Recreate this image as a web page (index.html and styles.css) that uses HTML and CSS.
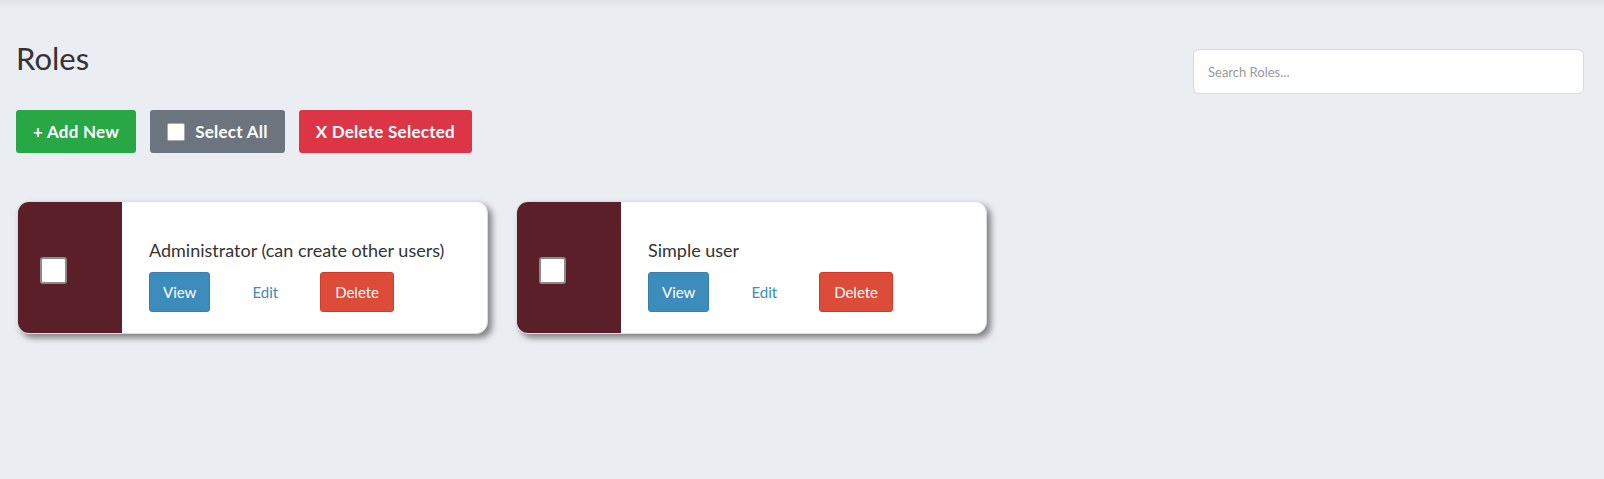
FILE: index.html
```html
<!DOCTYPE html>
<html lang="en">
<head>
<meta charset="utf-8">
<title>Roles</title>
<link rel="stylesheet" href="styles.css">
</head>
<body>
<div class="page">
  <div class="header">
    <div class="header-left">
      <h1 class="title">Roles</h1>
      <div class="toolbar">
        <button class="btn btn-green">+ Add New</button>
        <button class="btn btn-gray"><span class="chk-small"></span>Select All</button>
        <button class="btn btn-red">X Delete Selected</button>
      </div>
    </div>
    <input class="search" type="text" placeholder="Search Roles...">
  </div>
  <div class="cards">
    <div class="card">
      <div class="card-side"><span class="chk"></span></div>
      <div class="card-body">
        <div class="card-title">Administrator (can create other users)</div>
        <div class="card-actions">
          <button class="sbtn sbtn-blue">View</button>
          <button class="sbtn sbtn-link">Edit</button>
          <button class="sbtn sbtn-red">Delete</button>
        </div>
      </div>
    </div>
    <div class="card">
      <div class="card-side"><span class="chk"></span></div>
      <div class="card-body">
        <div class="card-title">Simple user</div>
        <div class="card-actions">
          <button class="sbtn sbtn-blue">View</button>
          <button class="sbtn sbtn-link">Edit</button>
          <button class="sbtn sbtn-red">Delete</button>
        </div>
      </div>
    </div>
  </div>
</div>
</body>
</html>
```
FILE: styles.css
```css
html, body {
  margin: 0;
  padding: 0;
}
body {
  background: linear-gradient(to bottom, #dfe2e7 0px, #eaedf2 9px) #eaedf2;
  background-repeat: no-repeat;
  background-color: #eaedf2;
  font-family: Lato, "Noto Sans", sans-serif;
  color: #333;
  height: 479px;
}
.page {
  padding: 0 20px 0 16px;
}
.header {
  display: flex;
  justify-content: space-between;
  align-items: flex-start;
}
.title {
  margin: 0;
  padding-top: 40px;
  font-size: 31px;
  font-weight: 400;
  line-height: 36px;
  color: #333;
}
.toolbar {
  display: flex;
  gap: 14px;
  margin-top: 34px;
}
.btn {
  border: none;
  border-radius: 3px;
  height: 43px;
  padding: 0 17px;
  font-family: inherit;
  font-size: 17px;
  font-weight: 700;
  letter-spacing: 0.25px;
  color: #fff;
  display: flex;
  align-items: center;
}
.btn-green { background: #28a745; }
.btn-gray { background: #6c757d; }
.btn-red { background: #dc3545; }
.chk-small {
  display: inline-block;
  width: 18px;
  height: 18px;
  background: #fff;
  border: 1px solid #aaa;
  border-radius: 2px;
  margin-right: 10px;
  box-sizing: border-box;
}
.search {
  margin-top: 49px;
  width: 391px;
  height: 45px;
  box-sizing: border-box;
  border: 1px solid #d6d9de;
  border-radius: 6px;
  background: #fff;
  padding: 0 14px;
  font-family: inherit;
  font-size: 13px;
  color: #555;
  outline: none;
}
.search::placeholder {
  color: #9a9a9a;
}
.cards {
  display: flex;
  gap: 28px;
  margin-top: 48px;
  padding-left: 1px;
}
.card {
  width: 471px;
  height: 133px;
  display: flex;
  background: #fff;
  border-radius: 12px;
  overflow: hidden;
  box-shadow: 4px 4px 6px rgba(0, 0, 0, 0.45);
  border: 1px solid #ddd;
  box-sizing: border-box;
}
.card-side {
  width: 104px;
  flex: none;
  background: #5b1f2a;
  display: flex;
  align-items: center;
  padding-left: 22px;
  padding-top: 6px;
  box-sizing: border-box;
}
.chk {
  display: block;
  width: 27px;
  height: 27px;
  box-sizing: border-box;
  background: #fff;
  border: 2px solid #8a8a8a;
  border-radius: 3px;
}
.card-body {
  padding: 35px 0 0 27px;
}
.card-title {
  font-size: 18px;
  line-height: 27px;
  color: #333;
}
.card-actions {
  display: flex;
  gap: 28px;
  margin-top: 8px;
}
.sbtn {
  height: 40px;
  padding: 0 13px;
  border-radius: 3px;
  font-family: inherit;
  font-size: 15px;
  border: 1px solid transparent;
  color: #fff;
}
.sbtn-blue { background: #3c8dbc; border-color: #367fa9; }
.sbtn-link { background: transparent; color: #3c8dbc; }
.sbtn-red { background: #dd4b39; border-color: #d73925; padding: 0 14px; }
```
